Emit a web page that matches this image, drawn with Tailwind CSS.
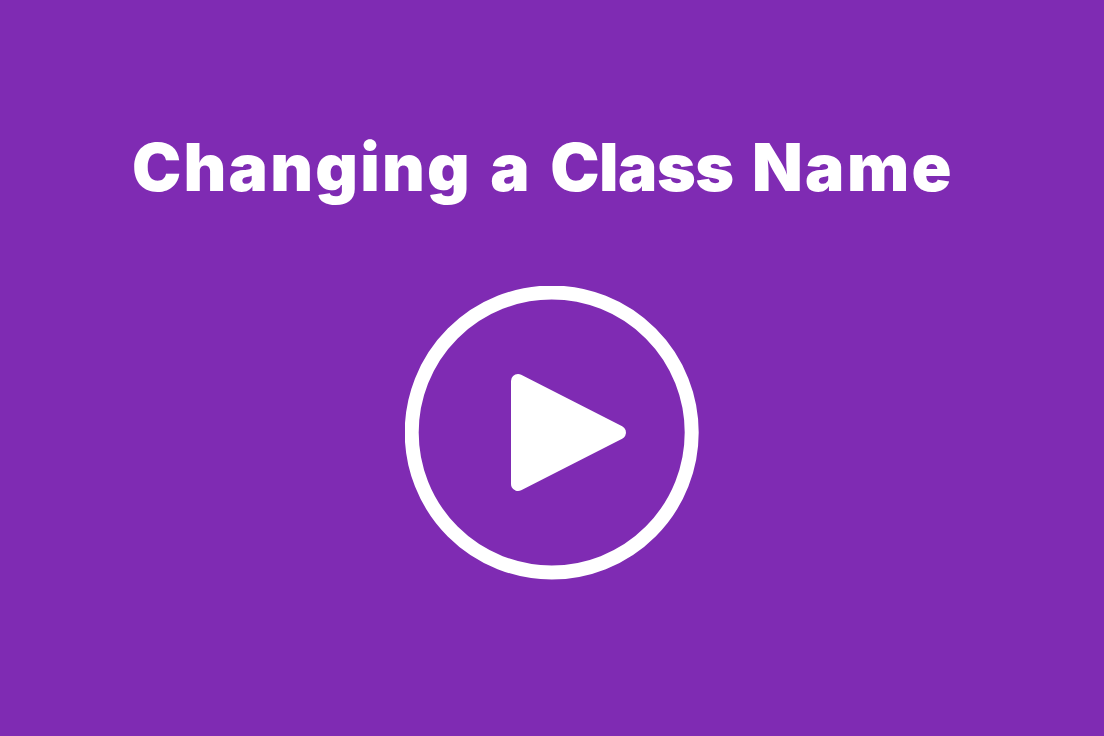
<!DOCTYPE html>
<html><head><meta charset="utf-8"><script src="https://cdn.jsdelivr.net/npm/@tailwindcss/browser@4"></script></head>
<body class="m-0">
<main class="w-[1104px] h-[736px] bg-[#7f2bb3] overflow-hidden flex flex-col items-center">
<h1 class="mt-[127px] ml-[-18px] h-[80px] leading-[80px] text-[66px] font-black tracking-[2.2px] [word-spacing:3px] text-white whitespace-nowrap font-['Inter','Liberation_Sans',sans-serif]">Changing a <span class="tracking-[-0.5px]">Class</span> <span class="tracking-[2.4px]">Name</span></h1>
<svg class="mt-[79px] shrink-0" width="294" height="294" viewBox="0 0 294 294" fill="none">
<circle cx="146.7" cy="146.5" r="140" stroke="#fff" stroke-width="14"/>
<path d="M113 95 L214 146.5 L113 198 Z" fill="#fff" stroke="#fff" stroke-width="14" stroke-linejoin="round"/>
</svg>
</main>
</body></html>
